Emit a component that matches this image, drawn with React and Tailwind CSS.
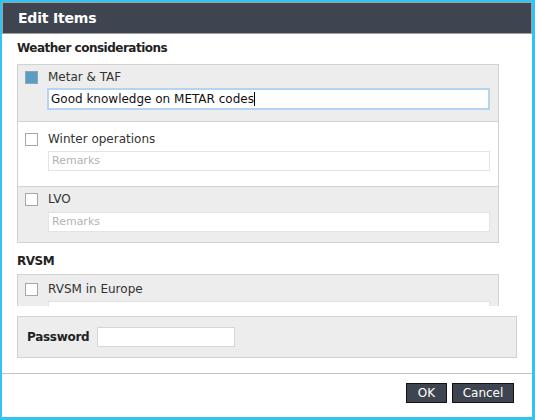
import React from "react";

const font = { fontFamily: '"DejaVu Sans", "Noto Sans", sans-serif' };

const Checkbox = ({ checked }) => (
  <span
    className={`block w-[13px] h-[13px] shrink-0 border ${
      checked ? "bg-[#5e9dc2] border-[#8aa6b8]" : "bg-white border-[#a6a6a6]"
    }`}
  />
);

const ItemRow = ({ label, checked, value, focused, bg, pt, pb, gap, border }) => (
  <div className={`${bg} ${border ? "border-t border-[#d2d2d2]" : ""} pl-[7px] pr-[8px] ${pt} ${pb}`}>
    <div className="flex items-center h-[16px]">
      <Checkbox checked={checked} />
      <span className="ml-[10px] text-[12px] leading-4 text-[#333]">{label}</span>
    </div>
    <div className={`${gap} ml-[23px]`}>
      {focused ? (
        <div className="h-[22px] -mt-[1px] -ml-[1px] border-2 border-[#b3d4f3] bg-white flex items-center pl-[2px] text-[12px] text-[#111]">
          Good knowledge on METAR codes
          <span className="inline-block w-px h-[14px] bg-black" />
        </div>
      ) : (
        <div className="h-[20px] border border-[#e3e3e3] bg-white flex items-center pl-[3px] text-[11px] text-[#b3b3b3]">
          {value}
        </div>
      )}
    </div>
  </div>
);

export default function App() {
  return (
    <div className="w-[535px] h-[420px] bg-[#33c3f0] pl-[2px] pt-[2px] pr-[3px] pb-[3px]" style={font}>
      <div className="h-full bg-white flex flex-col">
        {/* Header */}
        <div className="h-[32px] bg-[#3e4450] border border-[#a0a0a0] flex items-center pl-[15px]">
          <span className="text-white font-bold text-[14px] tracking-[-0.2px]">Edit Items</span>
        </div>

        {/* Scroll area */}
        <div className="h-[272px] overflow-hidden px-[15px] pt-[6px]">
          <div className="text-[12px] leading-4 font-bold text-[#222] tracking-[-0.5px]">Weather considerations</div>
          <div className="mt-[8px] mr-[18px] border border-[#d2d2d2]">
            <ItemRow label="Metar & TAF" checked focused bg="bg-[#ededed]" pt="pt-[4px]" pb="pb-[11px]" gap="mt-[4px]" />
            <ItemRow label="Winter operations" value="Remarks" bg="bg-white" pt="pt-[9px]" pb="pb-[15px]" gap="mt-[4px]" border />
            <ItemRow label="LVO" value="Remarks" bg="bg-[#ededed]" pt="pt-[4px]" pb="pb-[10px]" gap="mt-[5px]" border />
          </div>

          <div className="mt-[10px] text-[12px] leading-4 font-bold text-[#222] tracking-[-0.5px]">RVSM</div>
          <div className="mt-[5px] mr-[18px] border border-[#d2d2d2]">
            <ItemRow label="RVSM in Europe" value="Remarks" bg="bg-[#ededed]" pt="pt-[6px]" pb="pb-[10px]" gap="mt-[4px]" />
          </div>
        </div>

        {/* Password */}
        <div className="mt-[10px] mx-[15px] h-[42px] border border-[#d2d2d2] bg-[#ededed] flex items-center pl-[9px]">
          <span className="text-[12px] font-bold text-[#222] tracking-[-0.3px]">Password</span>
          <div className="ml-[8px] w-[138px] h-[20px] bg-white border border-[#d6d6d6]" />
        </div>

        {/* Footer */}
        <div className="mt-auto h-[44px] border-t border-[#c4c4c4] flex items-start justify-end pt-[9px] pr-[18px] gap-[5px]">
          <button className="h-[20px] w-[41px] bg-[#3e4450] border border-[#111] text-white text-[12px] leading-none">OK</button>
          <button className="h-[20px] w-[62px] bg-[#3e4450] border border-[#111] text-white text-[12px] leading-none">Cancel</button>
        </div>
      </div>
    </div>
  );
}
